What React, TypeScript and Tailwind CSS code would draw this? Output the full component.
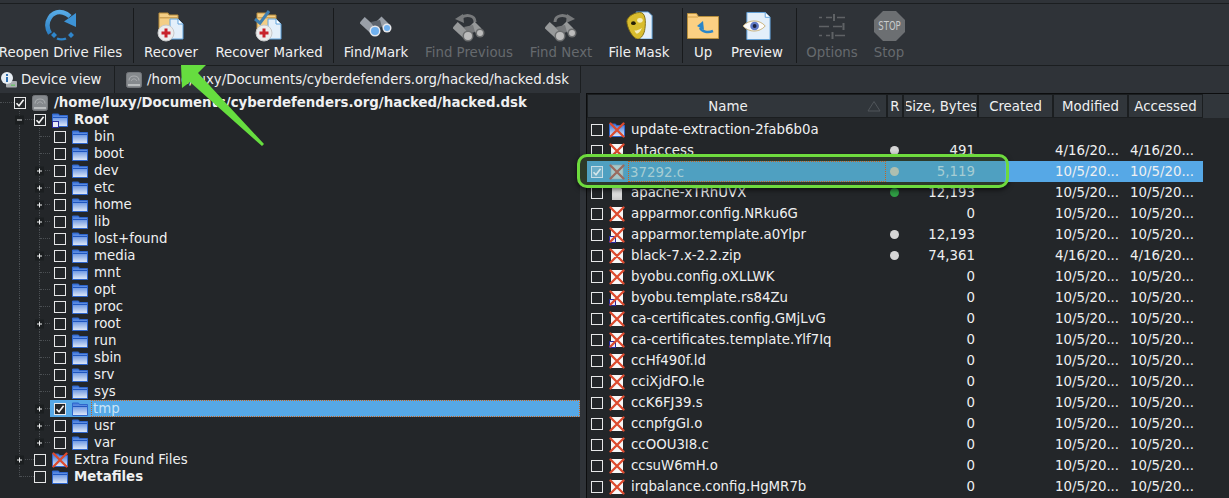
const tree = [
  { label: "bin" },
  { label: "boot" },
  { label: "dev", toggle: true },
  { label: "etc", toggle: true },
  { label: "home", toggle: true },
  { label: "lib", toggle: true },
  { label: "lost+found" },
  { label: "media", toggle: true },
  { label: "mnt" },
  { label: "opt" },
  { label: "proc" },
  { label: "root", toggle: true },
  { label: "run" },
  { label: "sbin" },
  { label: "srv" },
  { label: "sys" },
  { label: "tmp", toggle: true, selected: true },
  { label: "usr", toggle: true },
  { label: "var", toggle: true, lastChild: true },
];

const OCT = "10/5/20...";
const APR = "4/16/20...";

const files = [
  { name: "update-extraction-2fab6b0a", icon: "blue", size: "", dot: "", mod: "", acc: "" },
  { name: ".htaccess", icon: "page", size: "491", dot: "gray", mod: APR, acc: APR },
  { name: "37292.c", icon: "dim", size: "5,119", dot: "sel", mod: OCT, acc: OCT, selected: true },
  { name: "apache-xTRhUVX", icon: "plain", size: "12,193", dot: "green", mod: OCT, acc: OCT },
  { name: "apparmor.config.NRku6G", icon: "page", size: "0", dot: "", mod: OCT, acc: OCT },
  { name: "apparmor.template.a0Ylpr", icon: "link", size: "12,193", dot: "gray", mod: OCT, acc: OCT },
  { name: "black-7.x-2.2.zip", icon: "page", size: "74,361", dot: "gray", mod: APR, acc: APR },
  { name: "byobu.config.oXLLWK", icon: "page", size: "0", dot: "", mod: OCT, acc: OCT },
  { name: "byobu.template.rs84Zu", icon: "link", size: "0", dot: "", mod: OCT, acc: OCT },
  { name: "ca-certificates.config.GMjLvG", icon: "page", size: "0", dot: "", mod: OCT, acc: OCT },
  { name: "ca-certificates.template.Ylf7Iq", icon: "link", size: "0", dot: "", mod: OCT, acc: OCT },
  { name: "ccHf490f.ld", icon: "page", size: "0", dot: "", mod: OCT, acc: OCT },
  { name: "cciXjdFO.le", icon: "page", size: "0", dot: "", mod: OCT, acc: OCT },
  { name: "ccK6FJ39.s", icon: "page", size: "0", dot: "", mod: OCT, acc: OCT },
  { name: "ccnpfgGI.o", icon: "page", size: "0", dot: "", mod: OCT, acc: OCT },
  { name: "ccOOU3I8.c", icon: "page", size: "0", dot: "", mod: OCT, acc: OCT },
  { name: "ccsuW6mH.o", icon: "page", size: "0", dot: "", mod: OCT, acc: OCT },
  { name: "irqbalance.config.HgMR7b", icon: "page", size: "0", dot: "", mod: OCT, acc: OCT },
];

const FolderIcon = ({ link }: { link?: boolean }) => (
  <svg width="16" height="16" viewBox="0 0 16 16" className="shrink-0">
    <defs>
      <linearGradient id="fold" x1="0" y1="0" x2="0" y2="1">
        <stop offset="0" stopColor="#3b74da" />
        <stop offset="1" stopColor="#e3ebf8" />
      </linearGradient>
    </defs>
    <path d="M.5 2h6l1 1.500h8v11H.5z" fill="url(#fold)" stroke="#2f66cc" strokeWidth="1" />
    <path d="M1 5.500h14" stroke="#1f56c0" strokeWidth="1" />
    {link && <rect x="0.500" y="9.500" width="6" height="6" fill="#e8e8f6" stroke="#2a2a9c" strokeWidth="1" />}
  </svg>
);

const DiskIcon = ({ h = 16 }: { h?: number }) => (
  <svg width="16" height={h} viewBox="0 0 16 16" className="shrink-0">
    <rect x="0.500" y="0.500" width="15" height="15" rx="2" fill="#85898d" stroke="#74777b" />
    <path d="M3 8.500c0-6 10-6 10 0" fill="none" stroke="#a9acaf" strokeWidth="1.200" />
    <path d="M5.500 9c0-2.800 5-2.800 5 0" fill="none" stroke="#a9acaf" />
    <rect x="2" y="12" width="12" height="2" fill="#b9bcbe" />
  </svg>
);

const CrossIcon = ({ kind }: { kind: string }) => {
  const dim = kind === "dim";
  return (
    <svg width="16" height="16" viewBox="0 0 16 16" className="shrink-0">
      {kind === "blue" && <path d="M.5 2h6l1 1.500h8v11H.5z" fill="url(#fold)" stroke="#2f66cc" />}
      {kind === "dim" && <rect x="2" y="1" width="12" height="14" fill="#a4c7c9" stroke="#8fa6a8" strokeWidth="0.600" />}
      {kind !== "blue" && kind !== "dim" && <rect x="2" y="1" width="12" height="14" fill="#f7f7f7" />}
      {kind === "link" && <rect x="0.500" y="9.500" width="6" height="6" fill="#e8e8f6" stroke="#2a2a9c" strokeWidth="1" />}
      <path
        d="M1.500 1.500 14.500 14.500M14.500 1.500 1.500 14.500"
        stroke={dim ? "#9a6a5e" : "#dc4a2e"}
        strokeWidth="2.300"
        strokeLinecap="round"
      />
    </svg>
  );
};

const PlainPage = () => (
  <svg width="16" height="16" viewBox="0 0 16 16" className="shrink-0">
    <defs>
      <linearGradient id="pg" x1="0" y1="0" x2="0" y2="1">
        <stop offset="0" stopColor="#ffffff" />
        <stop offset="1" stopColor="#c9c9c9" />
      </linearGradient>
    </defs>
    <path d="M3 1h7l3 3v11H3z" fill="url(#pg)" />
  </svg>
);

const Check = ({ checked, dim }: { checked?: boolean; dim?: boolean }) => (
  <span
    className={`flex h-[12px] w-[12px] shrink-0 items-center justify-center border ${
      dim ? "border-[#c7dde6] bg-[#6eaec8]" : "border-[#e6e7e8] bg-[#232629]"
    }`}
  >
    {checked && (
      <svg width="10" height="10" viewBox="0 0 10 10">
        <path d="M1.500 5.200 4 7.800 8.600 1.800" fill="none" stroke={dim ? "#d4e6ea" : "#f4f4f4"} strokeWidth="1.600" />
      </svg>
    )}
  </span>
);

const Toggle = ({ minus, half }: { minus?: boolean; half?: boolean }) => (
  <span
    className={`absolute -right-[5px] ${
      half ? "top-full" : "top-1/2"
    } flex h-[9px] w-[9px] -translate-y-1/2 items-center justify-center bg-[#1b1e20]`}
  >
    <svg width="7" height="7" viewBox="0 0 7 7">
      <path d={minus ? "M1 3.500h5" : "M1 3.500h5M3.500 1v5"} stroke="#eff0f1" strokeWidth="1" />
    </svg>
  </span>
);

const Guide = ({ toggle, minus, half }: { toggle?: boolean; minus?: boolean; half?: boolean }) => (
  <span className={`relative w-[20px] shrink-0 self-start ${half ? "h-1/2" : "h-full"} border-r border-dotted border-[#4b4f53]`}>
    {toggle && <Toggle minus={minus} half={half} />}
  </span>
);

const Tick = ({ w }: { w: string }) => <span className={`${w} shrink-0 self-center border-t border-dotted border-[#4b4f53]`} />;

const RootRow = ({
  label,
  icon,
  checked,
  bold,
  toggle,
  minus,
  half,
}: {
  label: string;
  icon: React.ReactNode;
  checked?: boolean;
  bold?: boolean;
  toggle?: boolean;
  minus?: boolean;
  half?: boolean;
}) => (
  <div className="flex h-[17px] items-center">
    <Guide toggle={toggle} minus={minus} half={half} />
    <Tick w="w-[14px]" />
    <Check checked={checked} />
    <span className="ml-[6px]">{icon}</span>
    <span className={`ml-[6px] ${bold ? "font-bold" : ""}`}>{label}</span>
  </div>
);

const Tree = () => (
  <div className="w-[580px] shrink-0 bg-[#232629] pt-[1px] text-[13.33px] leading-[17px] text-[#eff0f1]">
    <div className="flex h-[17px] items-center">
      <Tick w="w-[14px]" />
      <Check checked />
      <span className="ml-[6px]"><DiskIcon /></span>
      <span className="ml-[6px] font-bold">/home/luxy/Documents/cyberdefenders.org/hacked/hacked.dsk</span>
    </div>
    <RootRow label="Root" icon={<FolderIcon link />} checked bold toggle minus />
    {tree.map((item) => (
      <div key={item.label} className="flex h-[17px] items-center">
        <Guide />
        <Guide toggle={item.toggle} half={item.lastChild} />
        <Tick w="w-[10px]" />
        <div className={`flex h-full flex-1 items-center pl-[4px] ${item.selected ? "bg-[#56a8e6]" : ""}`}>
          <Check checked={item.selected} />
          <span className="ml-[6px]"><FolderIcon /></span>
          <span
            className={`ml-[3px] h-full flex-1 ${
              item.selected ? "border border-dotted border-[#c8641e] pl-[1px] leading-[15px] text-[#c9e4f7]" : "pl-[3px]"
            }`}
          >
            {item.label}
          </span>
        </div>
      </div>
    ))}
    <RootRow label="Extra Found Files" icon={<CrossIcon kind="blue" />} toggle />
    <RootRow label="Metafiles" icon={<FolderIcon />} bold half />
  </div>
);

const Head = ({ w, pad, children }: { w: string; pad?: string; children?: React.ReactNode }) => (
  <div className={`${w} ${pad ?? ""} relative flex h-full shrink-0 items-center justify-center overflow-hidden border border-[#1b1e20] bg-[#31363b] pt-[1px] whitespace-nowrap`}>
    {children}
  </div>
);

const FileRow = ({ f }: { f: (typeof files)[number] }) => (
  <div
    className={`relative flex h-[21px] items-center ${
      f.selected ? "z-20 bg-[linear-gradient(90deg,#4fa0c1_418px,#56a8e6_418px)]" : ""
    }`}
  >
    <span className="ml-[4px] flex w-[12px] shrink-0">
      <Check checked={f.selected} dim={f.selected} />
    </span>
    <span className="ml-[6px]">
      {f.icon === "plain" ? <PlainPage /> : <CrossIcon kind={f.icon} />}
    </span>
    <span
      className={`ml-[3px] h-full w-[258px] shrink-0 truncate leading-[21px] ${
        f.selected ? "border border-dotted border-[#c8641e] pl-[1px] leading-[19px] text-[#a6cdd3]" : "pl-[3px]"
      }`}
    >
      {f.name}
    </span>
    <span className="flex w-[17px] shrink-0 justify-center">
      {f.dot && (
        <span
          className={`h-[9px] w-[9px] rounded-full ${
            f.dot === "green" ? "bg-[#2f9e44]" : f.dot === "sel" ? "bg-[#aebfb0]" : "bg-[#d5d5d5]"
          }`}
        />
      )}
    </span>
    <span className={`w-[72px] shrink-0 text-right ${f.selected ? "text-[#a6cdd3]" : ""}`}>{f.size}</span>
    <span className="w-[80px] shrink-0" />
    <span className="w-[75px] shrink-0 whitespace-nowrap">{f.mod}</span>
    <span className="whitespace-nowrap">{f.acc}</span>
  </div>
);

const FileList = () => (
  <div className="relative flex-1 border-l border-t border-[#0c0d0e] bg-[#232629] text-[13.33px] text-[#eff0f1]">
    <div className="flex h-[24px] bg-[#31363b]">
      <Head w="w-[300px]" pad="pr-[18px]">
        Name
        <svg width="14" height="12" viewBox="0 0 14 12" className="absolute right-[5px] top-[5px]">
          <path d="M7 1.500 13 11H1z" fill="none" stroke="#50555a" strokeWidth="1" />
        </svg>
      </Head>
      <Head w="w-[16px]">R</Head>
      <Head w="w-[75px]">
        <span className="flex w-[70px] justify-center overflow-hidden">Size, Bytes</span>
      </Head>
      <Head w="w-[75px]">Created</Head>
      <Head w="w-[75px]">Modified</Head>
      <Head w="w-[75px]">Accessed</Head>
    </div>
    <div className="w-[616px] pt-[1px]">
      {files.map((f) => (
        <FileRow key={f.name} f={f} />
      ))}
    </div>
    <div className="absolute left-[-10px] top-[60px] z-10 h-[34px] w-[432px] rounded-[10px] bg-[#2d3a2a] shadow-[0_2px_5px_rgba(0,0,0,0.6)]" />
    <div className="absolute left-[-10px] top-[60px] z-30 h-[34px] w-[432px] rounded-[10px] border-[3px] border-[#6edb3e]" />
  </div>
);

const ReopenIcon = () => (
  <svg width="34" height="34" viewBox="0 0 34 34" className="mb-[1px]">
    <defs>
      <linearGradient id="reo" x1="0" y1="0" x2="0" y2="1">
        <stop offset="0" stopColor="#56aae6" />
        <stop offset="1" stopColor="#2b7fc4" />
      </linearGradient>
    </defs>
    <path d="M6 25.500C-1 14 8 2 19 4.500c3 .7 5 2 7 4" fill="none" stroke="url(#reo)" strokeWidth="4.500" />
    <path d="M32 5v14L20 13.500z" fill="#3d93d6" />
    <path d="M7 27 10 24l3 3-3 3zM24 27l3-3 3 3-3 3zM13.500 29.500c2 1 6 1 8 0l1 2c-3 1.200-7 1.200-10 0z" fill="#2f86cc" />
  </svg>
);

const RedDisk = () => (
  <g>
    <circle cx="9" cy="21" r="8" fill="#ecedee" stroke="#c8c9ca" />
    <path d="M7.500 16.500h3v3h3v3h-3v3h-3v-3h-3v-3h3z" fill="#c8232c" />
  </g>
);

const FolderPage = () => (
  <g>
    <path d="M2 1h9l1 2h9v15H2z" fill="#f4ce85" stroke="#b88d3c" />
    <rect x="2" y="5" width="19" height="1.500" fill="#cfa356" />
    <path d="M13 7h8l5 5v15H13z" fill="#e3effa" stroke="#5fa2dc" />
    <path d="M21 7v5h5" fill="#fff" stroke="#5fa2dc" />
  </g>
);

const RecoverIcon = () => (
  <svg width="28" height="30" viewBox="0 0 28 30" className="mb-[1px]">
    <FolderPage />
    <RedDisk />
  </svg>
);

const RecoverMarkedIcon = () => (
  <svg width="30" height="32" viewBox="0 0 30 32" className="mb-[1px]">
    <g transform="translate(1 2)">
      <FolderPage />
      <RedDisk />
    </g>
    <path d="M1 9l5 4L15 1" fill="none" stroke="#3f7fb0" strokeWidth="3" />
  </svg>
);

const Binoculars = ({ off, flip }: { off?: boolean; flip?: boolean }) => {
  const glass = off ? "#bcbcbc" : "#6fb0ee";
  const body = off ? "#97999a" : "#9aa0a8";
  const ring = off ? "#6c6e6f" : "#e6e8ec";
  // lenses sit lower on the greyed out variants, the arrow goes above them
  const dy = off ? 5 : 0;
  return (
    <svg width="32" height="32" viewBox="0 0 32 32">
      {off && (
        <g transform={flip ? "translate(32 0) scale(-1 1)" : undefined}>
          <path d="M22 11c0-7-9-8-14-4" fill="none" stroke="#77797b" strokeWidth="3" />
          <path d="M2 8l8-5 1 9z" fill="#77797b" />
        </g>
      )}
      <g transform={`translate(0 ${dy})`}>
        <path d="M2 9 13 19" stroke={body} strokeWidth="8" />
        <path d="M19 8 26 15" stroke={body} strokeWidth="7" />
        <path d="M11 11 20 9 22 16 15 18z" fill={off ? "#77797b" : "#5d636b"} />
        <circle cx="15" cy="20" r="5.500" fill={ring} />
        <circle cx="15" cy="20" r="4" fill={glass} />
        <circle cx="27" cy="17" r="4.500" fill={ring} />
        <circle cx="27" cy="17" r="3" fill={glass} />
      </g>
    </svg>
  );
};

const MaskIcon = () => (
  <svg width="32" height="28" viewBox="0 0 32 30" className="mb-[4px]">
    <path d="M13 1h13l4 4v25H13z" fill="#e6f0fa" stroke="#5fa2dc" />
    <path d="M3 11C3 6 13 0 19 2c5 2 4 14 3 19-1 5-5 10-8 9C8 28 3 17 3 11z" fill="#d9bd2e" stroke="#7d6a12" />
    <ellipse cx="10" cy="13" rx="2.500" ry="2" fill="#241f08" />
    <ellipse cx="17" cy="10" rx="3" ry="2.500" fill="#f3ecbc" />
    <path d="M11 21c3 0 6-1 8-3-1 4-4 7-6 6z" fill="#f3ecbc" />
  </svg>
);

const UpIcon = () => (
  <svg width="32" height="26" viewBox="0 0 32 26" className="mb-[4px]">
    <path d="M.5 .5h9l2 3h20v22H.5z" fill="#fbd083" stroke="#b78f3d" />
    <path d="M1 4h10" stroke="#d6a348" />
    <path d="M13 15c2 4 8 5 13 3" fill="none" stroke="#2b86c9" strokeWidth="2.500" />
    <path d="M10 13l6-5 1 9z" fill="#2b86c9" />
  </svg>
);

const PreviewIcon = () => (
  <svg width="29" height="30" viewBox="0 0 30 30" className="mb-[2px]">
    <path d="M4 1h19l5 5v23H4z" fill="#e3effa" stroke="#5fa2dc" />
    <path d="M23 1v5h5" fill="#fff" stroke="#5fa2dc" />
    <path d="M0 15c6-7 17-7 23 0-6 7-17 7-23 0z" fill="#fbfbfb" stroke="#c9b27a" />
    <circle cx="12" cy="15" r="4.500" fill="#5f79c5" />
    <circle cx="12" cy="15" r="2" fill="#1c2340" />
  </svg>
);

const OptionsIcon = () => (
  <svg width="28" height="26" viewBox="0 0 28 26" stroke="#5f6265" fill="none" className="mb-[3px]">
    <path d="M1 3.500h3M8 3.500h6M19 3.500h8M1 12.500h10M15 12.500h9M1 21.500h3M8 21.500h4M17 21.500h10" strokeWidth="1.500" />
    <path d="M16 0v7M25.500 9v7M14.500 18v7" strokeWidth="2" />
  </svg>
);

const StopIcon = () => (
  <svg width="31" height="30" viewBox="0 0 31 30" className="mb-[2px]">
    <path d="M9 0h13l9 9v12l-9 9H9l-9-9V9z" fill="#6c6f72" />
    <text
      transform="translate(15.500 19) scale(1 1.400)"
      textAnchor="middle"
      fontSize="8.500"
      fill="#c9cbcc"
      fontFamily="DejaVu Sans, sans-serif"
    >
      STOP
    </text>
  </svg>
);

const Tool = ({ w, label, off, children }: { w: string; label: string; off?: boolean; children: React.ReactNode }) => (
  <div className={`${w} flex h-full shrink-0 flex-col items-center whitespace-nowrap`}>
    <div className="flex h-[38px] items-end justify-center">{children}</div>
    <div className={`mt-[1px] text-[13.33px] leading-[17px] ${off ? "text-[#666a6e]" : "text-[#eff0f1]"}`}>{label}</div>
  </div>
);

const Sep = () => <div className="ml-[1px] mt-[3px] h-[55px] w-[1px] shrink-0 bg-[#181a1c]" />;

export default function App() {
  return (
    <div
      className="relative flex h-[498px] w-[1229px] flex-col overflow-hidden bg-[#2f3338]"
      style={{ fontFamily: '"DejaVu Sans", sans-serif' }}
    >
      <div className="h-[4px] shrink-0 border-b border-[#1b1e20]" />
      <div className="flex h-[62px] shrink-0 border-b border-[#1b1e20] pt-[1px]">
        <Tool w="w-[121px]" label="Reopen Drive Files"><ReopenIcon /></Tool>
        <div className="w-[11px]" />
        <Sep />
        <Tool w="w-[74px]" label="Recover"><RecoverIcon /></Tool>
        <Tool w="w-[122px]" label="Recover Marked"><RecoverMarkedIcon /></Tool>
        <div className="w-[2px]" />
        <Sep />
        <Tool w="w-[84px]" label="Find/Mark"><Binoculars /></Tool>
        <Tool w="w-[102px]" label="Find Previous" off><Binoculars off /></Tool>
        <Tool w="w-[82px]" label="Find Next" off><Binoculars off flip /></Tool>
        <Tool w="w-[74px]" label="File Mask"><MaskIcon /></Tool>
        <div className="w-[5px]" />
        <Sep />
        <Tool w="w-[40px]" label="Up"><UpIcon /></Tool>
        <Tool w="w-[68px]" label="Preview"><PreviewIcon /></Tool>
        <div className="w-[4px]" />
        <Sep />
        <Tool w="w-[70px]" label="Options" off><OptionsIcon /></Tool>
        <Tool w="w-[44px]" label="Stop" off><StopIcon /></Tool>
      </div>
      <div className="flex h-[27px] shrink-0 text-[13.33px] text-[#eff0f1]">
        <div className="flex w-[115px] items-center gap-[4px] border-r border-[#1b1e20] pl-[1px]">
          <svg width="16" height="16" viewBox="0 0 16 16">
            <rect x="5" y="9" width="11" height="6.500" rx="1" fill="#a9adb0" />
            <rect x="10" y="12.500" width="4" height="1.500" fill="#6fc06f" />
            <circle cx="6" cy="6" r="6" fill="#e8eef4" />
            <rect x="5" y="2" width="2" height="2" fill="#2f6fb0" />
            <rect x="5" y="5" width="2" height="5" fill="#2f6fb0" />
          </svg>
          Device view
        </div>
        <div className="flex w-[466px] items-center gap-[5px] border-r border-[#1b1e20] pl-[11px]">
          <DiskIcon />
          /home/luxy/Documents/cyberdefenders.org/hacked/hacked.dsk
        </div>
      </div>
      <div className="flex min-h-0 flex-1">
        <Tree />
        <div className="w-[6px] shrink-0" />
        <FileList />
      </div>
      <svg width="100" height="100" viewBox="0 0 100 100" className="absolute left-[175px] top-[57px] z-40">
        <path d="M6 8H31L23 16 89 87 87 89 15 25 7 31z" fill="#66dd3f" />
      </svg>
    </div>
  );
}
